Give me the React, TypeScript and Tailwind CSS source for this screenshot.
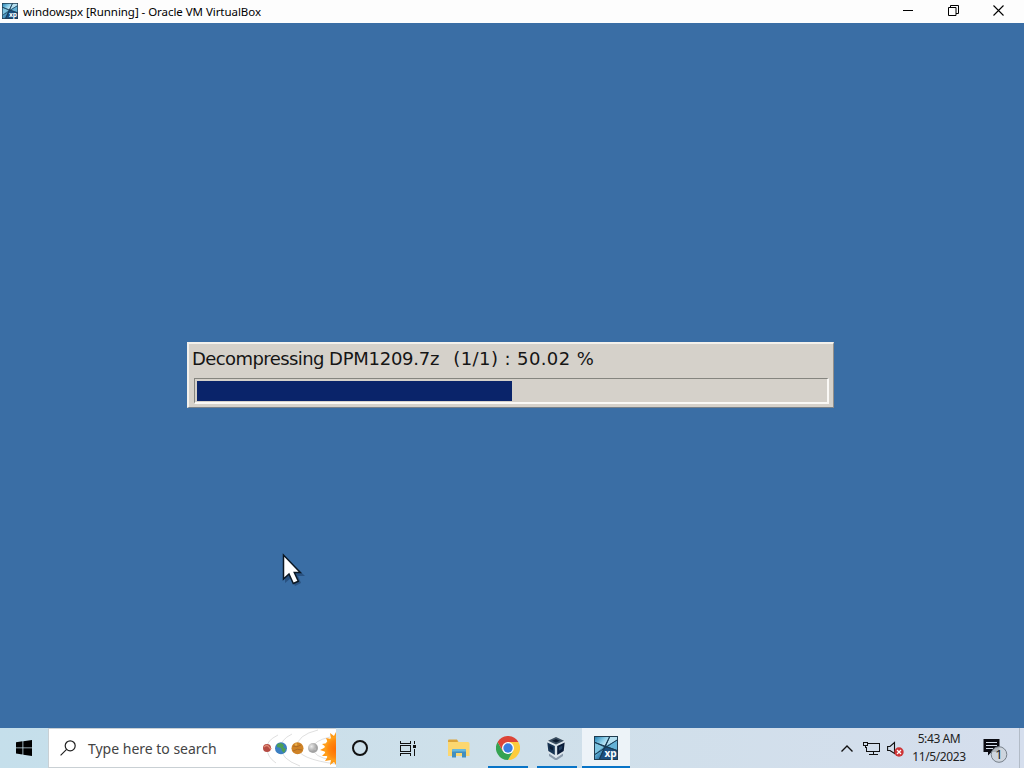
import type { ReactNode } from "react";

const PROGRESS = 50.02;

function XpIcon({ className }: { className?: string }) {
  return (
    <svg viewBox="0 0 24 24" className={className}>
      <defs>
        <linearGradient id="xpSky" x1="0" y1="0" x2="1" y2="0.6">
          <stop offset="0" stopColor="#2583b5" />
          <stop offset="0.6" stopColor="#8fd0ea" />
          <stop offset="1" stopColor="#d4eef8" />
        </linearGradient>
        <linearGradient id="xpDeep" x1="0" y1="0" x2="0.8" y2="1">
          <stop offset="0" stopColor="#bfe6f4" />
          <stop offset="0.4" stopColor="#5fb0d6" />
          <stop offset="1" stopColor="#1f5f92" />
        </linearGradient>
      </defs>
      <rect width="24" height="24" fill="#203c50" />
      <path d="M1 1h14l-4.500 9L1 6z" fill="url(#xpSky)" />
      <path d="M16 1h7v3l-11 6z" fill="#b5dff0" />
      <path d="M1 7l9 4-9 7z" fill="#7cc3e0" />
      <path d="M1 18.500l9-7.500-5 12H1z" fill="url(#xpDeep)" />
      <path d="M11 11l12 4v8H6z" fill="#1b5080" />
      <path d="M12 10l11-5.500V14z" fill="#63b1d6" />
      <path d="M1 6.500l22 8M15.500 1L5.500 23M1 18.500L23 4" stroke="#163c57" strokeWidth="1" fill="none" />
      <text x="10.500" y="20.500" fontSize="10" fontWeight="700" fill="#fff" fontFamily="Open Sans, sans-serif" textLength="12">
        xp
      </text>
    </svg>
  );
}

function StartIcon() {
  return (
    <svg viewBox="0 0 16 16" className="size-4" fill="#000">
      <path d="M0 2.2L6.5 1.3v6.2H0zM7.3 1.2L16 0v7.5H7.3zM0 8.3h6.5v6.2L0 13.6zM7.3 8.3H16V16l-8.7-1.3z" />
    </svg>
  );
}

function SearchIcon() {
  return (
    <svg viewBox="0 0 16 16" className="size-4" fill="none" stroke="#202020" strokeWidth="1.2">
      <circle cx="10.2" cy="5.8" r="5" />
      <path d="M6.6 9.4L0.6 15.4" />
    </svg>
  );
}

function PlanetsArt() {
  return (
    <svg viewBox="0 0 78 39" className="h-[39px] w-[78px]">
      <defs>
        <radialGradient id="sun">
          <stop offset="0" stopColor="#ff6a00" />
          <stop offset="0.7" stopColor="#ff8a10" />
          <stop offset="1" stopColor="#ffa51f" />
        </radialGradient>
        <radialGradient id="moon" cx="0.35" cy="0.35">
          <stop offset="0" stopColor="#ececec" />
          <stop offset="1" stopColor="#a3a3a3" />
        </radialGradient>
      </defs>
      <g fill="none" stroke="#c9c9c9" strokeWidth="0.6">
        <path d="M20 6Q8 12 9 19Q9 28 18 34" />
        <path d="M34 5Q22 11 23 19Q23 30 42 37" />
        <path d="M60 1Q39 6 39 18Q40 30 78 35" />
        <path d="M72 8Q55 12 55 19Q55 28 74 31" />
      </g>
      <circle cx="9" cy="19" r="4" fill="#b54b43" />
      <path d="M6 18q3-3 5 0t2 1" stroke="#df8a74" strokeWidth="1.3" fill="none" />
      <circle cx="23" cy="19.2" r="6" fill="#3c7fc2" />
      <path d="M19 15l4-1 3 2-1 2 3 2-2 4-2-2-1-3-4-1z" fill="#4c9e55" />
      <circle cx="39.5" cy="19.2" r="6" fill="#cf8326" />
      <path d="M35 17q4 2 8-1M35 22q4-3 9-1" stroke="#b06c24" strokeWidth="1" fill="none" />
      <circle cx="38" cy="15.5" r="1.2" fill="#e9b04c" />
      <circle cx="55" cy="19" r="5" fill="url(#moon)" />
      <circle cx="57" cy="20" r="1.2" fill="#b9b9b9" />
      <path
        d="M78 3l-2 4-4-3 1 6-5-1 2 5-6 1 4 3-6 3 6 2-4 4 6 0-3 5 6-1-1 5 4-3 2 3z"
        fill="#ff9a16"
      />
      <circle cx="79" cy="20" r="12.5" fill="url(#sun)" />
    </svg>
  );
}

function TaskViewIcon() {
  return (
    <svg viewBox="0 0 16 15" className="h-[15px] w-4" fill="none" stroke="#111" strokeWidth="1.2" shapeRendering="crispEdges">
      <path d="M0.5 0v2.5h10V0M0.5 15v-2.5h10V15M0.5 4.5h10v6h-10zM14.5 0v3M14.5 8v7" />
      <rect x="13" y="4" width="3" height="3" fill="#111" stroke="none" />
    </svg>
  );
}

function ExplorerIcon() {
  return (
    <svg viewBox="0 0 22 19" className="h-[19px] w-[22px]">
      <path d="M0 1.5Q0 .5 1 .5h8l1.5 2.5H0z" fill="#dba43a" />
      <path d="M0 3h20q1.5 0 1.5 1.5V17H0z" fill="#fcd770" />
      <path d="M0 3h10V1.5L9 3z" fill="#e9b544" />
      <path d="M4 18.5v-7q0-1.5 1.5-1.5h11q1.5 0 1.5 1.5v7h-4V14H8v4.5z" fill="#438fbd" />
      <path d="M4 11.5q0-1.5 1.5-1.5h11q1.5 0 1.5 1.5v1H4z" fill="#67b9df" />
    </svg>
  );
}

function ChromeIcon() {
  return (
    <svg viewBox="0 0 24 24" className="size-6">
      <path d="M12 6h10.4A12 12 0 0 1 12 24l5.2-9z" fill="#fdcc3c" />
      <path d="M1.6 6l5.2 9 5.2 3 5.2-3L12 24A12 12 0 0 1 1.6 6z" fill="#36a352" />
      <path d="M1.6 6A12 12 0 0 1 22.4 6H12L6.8 15z" fill="#dc4437" />
      <circle cx="12" cy="12" r="6" fill="#fff" />
      <circle cx="12" cy="12" r="4.7" fill="#3a7de0" />
    </svg>
  );
}

function VirtualBoxIcon() {
  return (
    <svg viewBox="0 0 22 24" className="h-6 w-[22px]">
      <path d="M4 17l7 5 7-5v3l-6 4h-2l-6-4z" fill="#8b9bac" />
      <path d="M11 0.500l9.500 4.500-1 11.500-8.500 5.500-8.500-5.500L1.500 5z" fill="#d9e3ea" />
      <path d="M11 1l8 3.800L11 8.500 3 4.800z" fill="#3a4e60" />
      <path d="M7 4.800l4-1.800 4 1.800-4 1.700z" fill="#0d1c30" />
      <path d="M2.300 6.500l7.500 3.500v9L3.300 15z" fill="#173453" />
      <path d="M4.500 9.500l3.500 1.800v3.500l-3-2z" fill="#0b1d35" />
      <path d="M19.700 6.500l-7.500 3.500v9l6.500-4z" fill="#0a1c38" />
      <path d="M17.500 9.500L14 11.300v3.500l3-2z" fill="#233f5e" />
    </svg>
  );
}

function NetworkIcon() {
  return (
    <svg viewBox="0 0 17 15" className="h-[15px] w-[17px]" fill="none" stroke="#111" shapeRendering="crispEdges">
      <path d="M5 2.500h11.500v8H3.500V6M10.500 11v3M6 13.500h9" />
      <path d="M0.500 1.500h4v3h-4zM2.500 5v2" />
    </svg>
  );
}

function MutedIcon() {
  return (
    <svg viewBox="0 0 17 17" className="size-[17px]">
      <path d="M0.600 5.500h2.400L7.500 1.500v11L3 9.500H0.600z" fill="none" stroke="#111" strokeWidth="1.100" />
      <circle cx="12" cy="11" r="4.700" fill="#ce3436" />
      <path d="M10 9l4 4M14 9l-4 4" stroke="#fff" strokeWidth="1.300" />
    </svg>
  );
}

function NotificationIcon() {
  return (
    <svg viewBox="0 0 25 25" className="size-[25px]">
      <path d="M0.500 0h16v13H8.500l-3.500 3.500V13H0.500z" fill="#0b0b12" />
      <path d="M3 3.500h11M3 6.500h11M3 9.500h7" stroke="#d5deeb" />
      <circle cx="16" cy="15.500" r="7.800" fill="#cdd3da" fillOpacity="0.850" stroke="#77808a" />
      <text x="16" y="20" textAnchor="middle" fontSize="13" fill="#15191d" fontFamily="Noto Sans, sans-serif">
        1
      </text>
    </svg>
  );
}

function Pointer() {
  return (
    <svg viewBox="0 0 24 34" className="absolute top-[552px] left-[281px] h-[34px] w-6">
      <path d="M4 5v26l6-5 4 8 6-3-3-7h7z" fill="#17365d" opacity="0.500" />
      <path
        d="M2.500 3v24l5.500-5 4.300 9.500 5-2.200-4-8.800h6z"
        fill="#fff"
        stroke="#0b1723"
        strokeWidth="1.500"
      />
    </svg>
  );
}

function TaskButton({ children, bar = "" }: { children: ReactNode; bar?: string }) {
  return (
    <div className="relative flex h-10 w-12 items-center justify-center">
      {children}
      {bar && <span className={`absolute bottom-0 h-[2px] bg-[#0874c7] ${bar}`} />}
    </div>
  );
}

function TitleBar() {
  return (
    <header className="flex h-[23px] items-center bg-[#fdfdfd] pl-0.5">
      <XpIcon className="size-4 -mt-px" />
      <span className="ml-[5px] w-[240px] text-[11.500px] leading-4 tracking-[-0.050px] whitespace-nowrap text-black">
        windowspx [Running] - Oracle VM VirtualBox
      </span>
      <div className="ml-auto flex items-center gap-[34px] pr-5 pb-[2px]">
        <svg viewBox="0 0 11 11" className="size-[11px]">
          <path d="M0 5.500h10" stroke="#000" />
        </svg>
        <svg viewBox="0 0 11 11" className="size-[11px]" fill="none" stroke="#000">
          <path d="M0.500 2.500h7.500v8H0.500zM2.500 2.500V0.500h8v8H8" />
        </svg>
        <svg viewBox="0 0 11 11" className="size-[11px]">
          <path d="M0.500 0.500l10 10M10.500 0.500l-10 10" stroke="#000" strokeWidth="1.100" />
        </svg>
      </div>
    </header>
  );
}

function ProgressDialog() {
  return (
    <div className="mt-[319px] ml-[187px] h-[66px] w-[647px] border-2 border-r border-b border-t-[#f3f1ec] border-r-[#918f8b] border-b-[#77818a] border-l-[#f3f1ec] bg-[#d5d1ca] pl-[3px]">
      <p className="h-[34px] text-[18px] leading-[30px] whitespace-pre text-[#151515] [font-family:'DejaVu_Sans','Noto_Sans',sans-serif]">
        <span className="tracking-[-0.580px]">Decompressing </span>
        <span className="tracking-[-0.270px]">DPM1209.7z</span>
        <span className="ml-[2px] tracking-[0.400px]">{"  "}(1/1) : {PROGRESS} %</span>
      </p>
      <div className="ml-[2px] h-[26px] w-[635px] border-2 border-t border-l border-t-[#85857f] border-r-[#faf9f6] border-b-[#faf9f6] border-l-[#85857f] pt-[2px] pl-[2px]">
        <div className="h-5 bg-[#0a246a]" style={{ width: `${PROGRESS}%` }} />
      </div>
    </div>
  );
}

function Taskbar() {
  return (
    <footer className="flex h-10 items-center bg-linear-to-r from-[#c5dfeb] via-[#cfe0ea] to-[#d5deed]">
      <TaskButton>
        <StartIcon />
      </TaskButton>
      <div className="flex h-10 w-[288px] items-center border border-r-0 border-[#c9d0d4] bg-white pl-[11px]">
        <SearchIcon />
        <span className="ml-3 pt-px text-[14px] tracking-[-0.010px] whitespace-nowrap text-[#444]">
          Type here to search
        </span>
        <div className="ml-auto">
          <PlanetsArt />
        </div>
      </div>
      <TaskButton>
        <span className="size-4 rounded-full border-2 border-[#111]" />
      </TaskButton>
      <TaskButton>
        <TaskViewIcon />
      </TaskButton>
      <div className="ml-[2px] flex">
        <TaskButton>
          <div className="pl-px">
            <ExplorerIcon />
          </div>
        </TaskButton>
        <TaskButton bar="left-1.5 w-10">
          <div className="ml-[3px]">
            <ChromeIcon />
          </div>
        </TaskButton>
        <TaskButton bar="left-[7px] w-10">
          <div className="ml-1">
            <VirtualBoxIcon />
          </div>
        </TaskButton>
        <div className="ml-1 bg-[#edf3f8]">
          <TaskButton bar="left-0 w-12">
            <XpIcon className="size-6" />
          </TaskButton>
        </div>
      </div>

      {/* System tray */}
      <div className="ml-auto flex h-10 items-center">
        <svg viewBox="0 0 12 7" className="mr-[10px] h-[7px] w-3">
          <path d="M0.500 6.500L6 1l5.500 5.500" fill="none" stroke="#111" strokeWidth="1.400" />
        </svg>
        <NetworkIcon />
        <div className="ml-[7px] pt-[2px]">
          <MutedIcon />
        </div>
        <div className="ml-[5px] w-[60px] pb-px text-center text-[12px] leading-[18px] tracking-[-0.400px] whitespace-nowrap text-[#222]">
          <p>5:43 AM</p>
          <p>11/5/2023</p>
        </div>
        <div className="ml-[14px] pt-[7px]">
          <NotificationIcon />
        </div>
        <div className="ml-[11px] h-10 w-[5px] border-l border-[#b2bbc7]" />
      </div>
    </footer>
  );
}

export default function App() {
  return (
    <div className="relative flex h-[768px] w-[1024px] flex-col overflow-hidden bg-[#3a6ea5] [font-family:'Noto_Sans','Open_Sans',sans-serif]">
      <TitleBar />
      <main className="flex-1">
        <ProgressDialog />
      </main>
      <Taskbar />
      <Pointer />
    </div>
  );
}
